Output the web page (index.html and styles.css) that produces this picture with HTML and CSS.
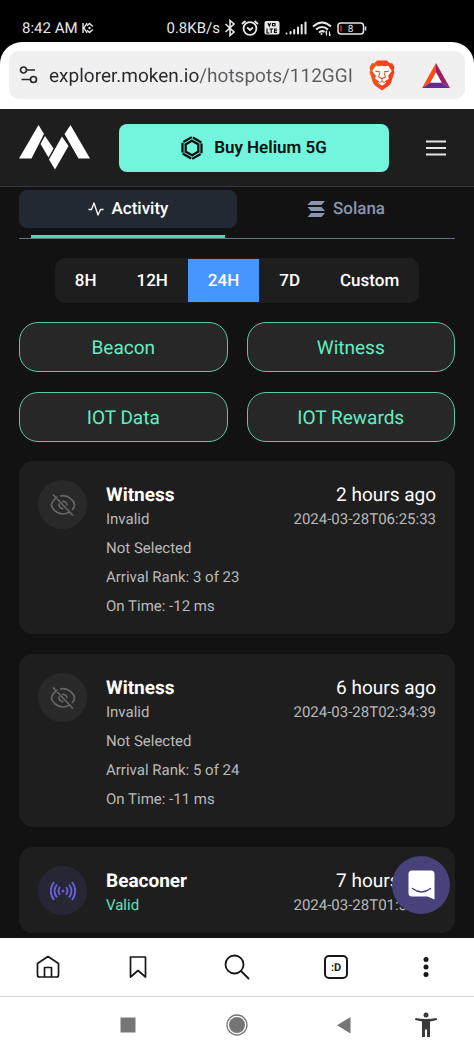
FILE: index.html
```html
<!DOCTYPE html>
<html lang="en">
<head>
<meta charset="utf-8">
<meta name="viewport" content="width=device-width, initial-scale=1">
<title>Moken Explorer</title>
<link rel="stylesheet" href="styles.css">
</head>
<body>
<div class="phone">
  <div class="status-bar">
    <span class="status-time">8:42 AM</span>
    <svg class="status-app" viewBox="0 0 12 12" width="12" height="12" fill="none" stroke="#e8e8e8" stroke-width="1.400"><path d="M1 1v10M5 1 2 6l3 5M5 3.800 7.500 1.400l3.300 3.200M5 8.200l2.500 2.400 3.300-3.200"/><path fill="#e8e8e8" stroke="none" d="M7.500 4.500 9 6 7.500 7.500 6 6z"/></svg>
    <span class="status-speed">0.8KB/s</span>
    <div class="status-icons">
      <svg viewBox="0 0 12 18" width="12" height="18" fill="none" stroke="#e8e8e8" stroke-width="1.600"><path d="M1.500 5 10 13l-4 3.500v-15L10 5l-8.500 8"/></svg>
      <svg viewBox="0 0 18 18" width="18" height="18" fill="none" stroke="#e8e8e8" stroke-width="1.800"><circle cx="9" cy="9.500" r="6.400"/><path d="M1 5l3.500-3M17 5l-3.500-3M6.200 8.500 9 11l3-2.500"/></svg>
      <svg viewBox="0 0 16 14" width="16" height="14"><rect width="15" height="13.500" x=".5" rx="2" fill="#e8e8e8"/><g fill="none" stroke="#000" stroke-width="1.100"><path d="M4 2l1.300 3L6.600 2M8.500 2.500H11v2.300H8.500zM3 7.500V12h2.300M5.500 8h3.500M7.200 8v4M13 8h-2.500v3.500H13M10.500 9.800H13"/></g></svg>
      <svg viewBox="0 0 22 14" width="22" height="14" stroke="#e8e8e8" stroke-width="2" stroke-linecap="round"><path d="M1.500 12.500v.1M5.500 11v1.500M9.200 9v3.500M13 6.500v6M16.700 4v8.500M20.500 1.500v11"/></svg>
      <svg viewBox="0 0 20 15" width="20" height="15" fill="none" stroke="#e8e8e8" stroke-width="2"><path d="M1 5.500q9-8 18 0M4 8.500q6-5 12 0M7 11.500q3-2.500 5.500-.5"/><circle cx="9.500" cy="13" r="1" fill="#e8e8e8" stroke="none"/><path stroke-width="1.200" d="M14.500 14.500v-4l-1 1.200M17.500 10.500v4l1-1.200"/></svg>
      <svg class="battery" viewBox="0 0 30 13" width="30" height="13"><rect x="1" y="1" width="25.500" height="11" rx="3" fill="none" stroke="#e8e8e8" stroke-width="1.500"/><path d="M28.500 4.500v4" stroke="#e8e8e8" stroke-width="1.500"/><path d="M4 3.500v6" stroke="#e0243a" stroke-width="1.500"/><text class="battery-text" x="13.500" y="9.800" text-anchor="middle">8</text></svg>
    </div>
  </div>

  <div class="browser-bar">
    <div class="address">
      <svg class="site-icon" viewBox="0 0 20 18" width="20" height="18" fill="none" stroke="#28292d" stroke-width="1.700"><circle cx="5.500" cy="4" r="3"/><path d="M8.500 4H17M3.500 13.500h9"/><circle cx="15.500" cy="13.500" r="3"/></svg>
      <input class="url" type="text" aria-label="Address" value="explorer.moken.io/hotspots/112GGI">
      <button class="icon-button shield" type="button" aria-label="Brave Shields">
        <svg viewBox="0 0 26 31" width="26" height="31"><defs><linearGradient id="lion"><stop stop-color="#f4561e"/><stop offset="1" stop-color="#f8361d"/></linearGradient></defs><path fill="url(#lion)" d="M8 .5h10l3 3 2-.5 2.500 4-.8 3 .8 2-3.500 11-2 2.500L13 30.500 6 25.500 4 23 .5 12l.8-2-.8-3L3 3l2 .5z"/><path fill="#fff" d="m7 5.500 2.500.8L13 5.700l3.500.6 2.500-.8 3.800 5.500-3.600 4.700.6 3-4.300 2.800 1.800 1.200L13 25.800l-4.300-3.100 1.800-1.200-4.300-2.800.6-3L3.200 11z"/><path fill="#f2441d" d="m6 10.500 5 .8-.3 1.300-4-.8zM20 10.500l-5 .8.300 1.300 4-.8zM10.500 12.500l.8.200-1 4 2.700 1.300v3.200l-.4-.1-.2-2.200L9 17.200zM15.500 12.500l-.8.200 1 4-2.700 1.300v3.200l.4-.1.2-2.200L17 17.200zM10 22.500l3-1.800 3 1.800-.6.600-2.400-1.300-2.400 1.300z"/></svg>
      </button>
      <button class="icon-button" type="button" aria-label="Brave Rewards">
        <svg viewBox="0 0 28 25" width="28" height="25"><path fill="#ff4b14" d="M14 0 0 25l8.500-5.500L14 9.500z"/><path fill="#9e1f63" d="m14 0 14 25-8.500-5.500L14 9.500z"/><path fill="#662d91" d="m0 25 8.500-5.500h11L28 25z"/><path fill="#fff" d="m14 9.500 5.500 10h-11z"/></svg>
      </button>
    </div>
  </div>

  <main class="page">
    <header class="site-header">
      <a class="logo" href="#" aria-label="Moken">
        <svg viewBox="0 0 71 45" width="71" height="45" fill="#fff"><path d="M19.500 0 25 9 12.500 33.500H0zM26 11l8.500 12.500-5 9L21.500 19zM43 11.500 49.500 21 36 44.500 30 34.500zM51.500 0 71 33.500H59.500L45.500 9z"/></svg>
      </a>
      <button class="buy" type="button">
        <svg viewBox="-11 -12 22 24" width="22" height="24" fill="none" stroke="#07110f" stroke-width="2.300"><path id="blade" d="M9.500-4.500v9.800M6.300-4.800v7.800"/><use href="#blade" transform="rotate(60)"/><use href="#blade" transform="rotate(120)"/><use href="#blade" transform="rotate(180)"/><use href="#blade" transform="rotate(240)"/><use href="#blade" transform="rotate(300)"/></svg>
        <span>Buy Helium 5G</span>
      </button>
      <button class="icon-button" type="button" aria-label="Menu">
        <svg viewBox="0 0 20 16" width="20" height="16" stroke="#e6e6e6" stroke-width="1.900"><path d="M0 1.500h20M0 8h20M0 14.500h20"/></svg>
      </button>
    </header>

    <div class="content">
      <nav class="tabs">
        <button class="tab tab-active" type="button">
          <svg viewBox="0 0 16 14" width="16" height="14" fill="none" stroke="#fff" stroke-width="1.300" stroke-linejoin="round"><path d="M.5 7.500h3L6 1l4 12 2.500-5.500h3"/></svg>
          <span>Activity</span>
        </button>
        <button class="tab" type="button">
          <svg viewBox="0 0 18 16" width="18" height="16" fill="#8795b0"><path d="M4 0h14l-3.500 4H.5zM.5 6h14L18 10H4zM4 12h14l-3.500 4H.5z"/></svg>
          <span>Solana</span>
        </button>
      </nav>

      <div class="ranges">
        <button type="button">8H</button>
        <button type="button">12H</button>
        <button class="range-active" type="button">24H</button>
        <button type="button">7D</button>
        <button type="button">Custom</button>
      </div>

      <div class="filters">
        <button type="button">Beacon</button>
        <button type="button">Witness</button>
        <button type="button">IOT Data</button>
        <button type="button">IOT Rewards</button>
      </div>

      <article class="card">
        <div class="badge"><svg viewBox="0 0 26 22" width="26" height="22" fill="none" stroke="#656565" stroke-width="1.700"><path d="M7.500 3C4 5 1.500 9 1.500 11c0 3 5 9 11.500 9 2.500 0 4.500-.8 6.500-2M10 2c9-2 14.500 6 14.500 9 0 1.500-1 3.500-2.500 5M9.500 9.500c-1.500 3 1 5.500 4 5M12 7.500c3-.5 5 1 5 4M3 .5 23 21.500"/></svg></div>
        <div class="details">
          <h2>Witness</h2>
          <p>Invalid</p>
          <p class="extra">Not Selected</p>
          <p class="extra">Arrival Rank: 3 of 23</p>
          <p class="extra">On Time: -12 ms</p>
        </div>
        <div class="when"><span class="ago">2 hours ago</span><time>2024-03-28T06:25:33</time></div>
      </article>

      <article class="card">
        <div class="badge"><svg viewBox="0 0 26 22" width="26" height="22" fill="none" stroke="#656565" stroke-width="1.700"><path d="M7.500 3C4 5 1.500 9 1.500 11c0 3 5 9 11.500 9 2.500 0 4.500-.8 6.500-2M10 2c9-2 14.500 6 14.500 9 0 1.500-1 3.500-2.500 5M9.500 9.500c-1.500 3 1 5.500 4 5M12 7.500c3-.5 5 1 5 4M3 .5 23 21.500"/></svg></div>
        <div class="details">
          <h2>Witness</h2>
          <p>Invalid</p>
          <p class="extra">Not Selected</p>
          <p class="extra">Arrival Rank: 5 of 24</p>
          <p class="extra">On Time: -11 ms</p>
        </div>
        <div class="when"><span class="ago">6 hours ago</span><time>2024-03-28T02:34:39</time></div>
      </article>

      <article class="card">
        <div class="badge badge-beacon"><svg viewBox="0 0 26 20" width="26" height="20" fill="none" stroke="#6562d8" stroke-width="1.900"><circle cx="13" cy="10" r="1.500" fill="#6562d8" stroke="none"/><path d="M10 6q-3 4 0 8M16 6q3 4 0 8M7 3.500q-5 6.500 0 13M19 3.500q5 6.500 0 13M4 1q-6.500 9 0 18M22 1q6.500 9 0 18"/></svg></div>
        <div class="details">
          <h2>Beaconer</h2>
          <p class="valid">Valid</p>
        </div>
        <div class="when"><span class="ago">7 hours ago</span><time>2024-03-28T01:35:33</time></div>
      </article>
    </div>

    <button class="chat" type="button" aria-label="Open chat">
      <svg viewBox="0 0 27 30" width="27" height="30"><path fill="#fff" d="M4 .5h19a3.500 3.500 0 0 1 3.500 3.500v25.500l-7-3H4A3.500 3.500 0 0 1 .5 23V4A3.500 3.500 0 0 1 4 .5z"/><path d="M4.500 18.500q9 7 18 0" fill="none" stroke="#47427a" stroke-width="1.500" stroke-linecap="round"/></svg>
    </button>
  </main>

  <nav class="toolbar">
    <button class="icon-button" type="button" aria-label="Home"><svg viewBox="0 0 24 24" width="24" height="24" fill="none" stroke="#16171b" stroke-width="1.700" stroke-linejoin="round"><path d="M1.500 8.500 12 1.500l10.500 7v11.500a2 2 0 0 1-2 2h-17a2 2 0 0 1-2-2zM8.500 22v-9.500h7V22"/></svg></button>
    <button class="icon-button" type="button" aria-label="Bookmarks"><svg viewBox="0 0 24 24" width="24" height="24" fill="none" stroke="#16171b" stroke-width="1.700" stroke-linejoin="round"><path d="M4.500 2h15v20L12 15.500 4.500 22z"/></svg></button>
    <button class="icon-button" type="button" aria-label="Search"><svg viewBox="0 0 26 26" width="26" height="26" fill="none" stroke="#16171b" stroke-width="1.800" stroke-linecap="round"><circle cx="10.500" cy="10.500" r="9"/><path d="m17 17 7.500 7.500"/></svg></button>
    <button class="tab-count" type="button">:D</button>
    <button class="icon-button" type="button" aria-label="More"><svg viewBox="0 0 24 22" width="24" height="22" fill="#16171b"><circle cx="12" cy="3.500" r="2.500"/><circle cx="12" cy="11" r="2.500"/><circle cx="12" cy="18.500" r="2.500"/></svg></button>
  </nav>

  <nav class="system-bar">
    <button class="icon-button recents" type="button" aria-label="Recent apps"><svg viewBox="0 0 24 24" width="24" height="24"><path fill="#757575" d="M4.500 4.500h15v15h-15z"/></svg></button>
    <button class="icon-button" type="button" aria-label="Home screen"><svg viewBox="0 0 24 24" width="24" height="24"><circle cx="12" cy="12" r="10" fill="none" stroke="#757575" stroke-width="1.300"/><circle cx="12" cy="12" r="8" fill="#757575"/></svg></button>
    <button class="icon-button" type="button" aria-label="Back"><svg viewBox="0 0 24 24" width="24" height="24"><path fill="#757575" d="M18.500 4v16.500L5 12.200z"/></svg></button>
    <button class="icon-button" type="button" aria-label="Accessibility"><svg viewBox="0 0 24 26" width="24" height="26" fill="#3a3a3a"><circle cx="12" cy="3" r="2.500"/><path d="M1.500 6q10.500 2 21 0l.5 2-7 1.500V25h-3v-7.500h-2V25H8V9.500L1 8z"/></svg></button>
  </nav>
</div>
</body>
</html>
```
FILE: styles.css
```css
* {
  box-sizing: border-box;
}

body {
  margin: 0;
  background: #000;
  font-family: Roboto, "Liberation Sans", sans-serif;
  color: #fff;
  text-rendering: geometricPrecision;
}

button,
input {
  margin: 0;
  padding: 0;
  border: 0;
  background: none;
  font: inherit;
  color: inherit;
  text-rendering: inherit;
}

h2,
p {
  margin: 0;
}

svg {
  display: block;
  flex: none;
}

.phone {
  display: flex;
  flex-direction: column;
  height: 100vh;
  overflow: hidden;
}

.icon-button {
  display: flex;
  align-items: center;
  justify-content: center;
}

.status-bar {
  display: flex;
  align-items: center;
  gap: 4px;
  padding: 18px 107px 4px 22px;
  height: 42px;
  flex: none;
  color: #e8e8e8;
  font-size: 15px;
  line-height: 20px;
}

.status-speed {
  margin-left: auto;
}

.status-icons {
  display: flex;
  align-items: center;
  gap: 5px;
}

.battery-text {
  font-size: 10px;
  fill: #e8e8e8;
}

.browser-bar {
  flex: none;
  padding: 9px 9px 10px;
  background: #fff;
  border-radius: 22px 22px 0 0;
}

.address {
  display: flex;
  align-items: center;
  height: 48px;
  padding: 0 15px 0 9px;
  border-radius: 10px;
  background: #f0f0f1;
}

.url {
  flex: 1;
  min-width: 0;
  height: 32px;
  margin-left: 11px;
  outline: 0;
  font-size: 19px;
  background: linear-gradient(90deg, #28292d 150px, #5b5c60 150px);
  -webkit-background-clip: text;
  background-clip: text;
  -webkit-text-fill-color: transparent;
}

.shield {
  margin: 0 27px 0 12px;
}

.page {
  position: relative;
  flex: 1;
  min-height: 0;
  overflow: hidden;
  background: #121212;
}

.site-header {
  display: flex;
  align-items: center;
  height: 78px;
  padding: 0 28px 0 19px;
  background: #1e1e1e;
  border-bottom: 1px solid #33363b;
}

.buy {
  display: flex;
  align-items: center;
  justify-content: center;
  gap: 11px;
  flex: 1;
  height: 48px;
  margin: 0 37px 0 29px;
  border-radius: 8px;
  background: #72f5dc;
  color: #07110f;
  font-size: 17px;
  font-weight: 600;
}

.content {
  padding: 3px 19px 0;
}

.tabs {
  display: grid;
  grid-template-columns: 1fr 1fr;
  border-bottom: 1px solid #697386;
}

.tab {
  position: relative;
  display: flex;
  align-items: center;
  justify-content: center;
  gap: 8px;
  height: 38px;
  margin-bottom: 10px;
  border-radius: 8px;
  color: #8795b0;
  font-size: 17px;
  font-weight: 500;
}

.tab-active {
  background: #232932;
  color: #fff;
}

.tab-active::after {
  content: "";
  position: absolute;
  left: 12px;
  right: 12px;
  bottom: -10px;
  height: 3px;
  background: #4fd6ae;
}

.ranges {
  display: flex;
  width: fit-content;
  margin: 19px auto;
  padding: 1px 0;
  border-radius: 10px;
  background: #1e1e1e;
}

.ranges button {
  height: 43px;
  padding: 0 20px;
  font-size: 17px;
  font-weight: 500;
}

.ranges .range-active {
  background: #4796ff;
}

.filters {
  display: grid;
  grid-template-columns: 1fr 1fr;
  gap: 20px 19px;
  margin-bottom: 19px;
}

.filters button {
  height: 50px;
  border: 1px solid #5cc9a4;
  border-radius: 19px;
  background: #272727;
  color: #64edc3;
  font-size: 19px;
}

.card {
  display: flex;
  align-items: flex-start;
  margin-bottom: 20px;
  padding: 19px 19px 18px;
  border-radius: 14px;
  background: #1e1e1e;
}

.badge {
  display: flex;
  align-items: center;
  justify-content: center;
  flex: none;
  width: 49px;
  height: 49px;
  margin-right: 19px;
  border-radius: 50%;
  background: #292929;
}

.badge-beacon {
  background: #272635;
}

.details {
  flex: 1;
  color: #b9b9b9;
  font-size: 15px;
  line-height: 19px;
}

.details h2 {
  color: #fff;
  font-size: 19px;
  line-height: 30px;
  font-weight: 700;
}

.details .extra {
  margin-top: 10px;
}

.details .valid {
  color: #5fe3bb;
}

.when {
  display: flex;
  flex-direction: column;
  text-align: right;
  color: #b9b9b9;
  font-size: 15px;
  line-height: 19px;
}

.ago {
  color: #fff;
  font-size: 19px;
  line-height: 30px;
}

.chat {
  position: absolute;
  right: 24px;
  bottom: 24px;
  display: flex;
  align-items: center;
  justify-content: center;
  width: 58px;
  height: 58px;
  border-radius: 50%;
  background: #47427a;
}

.toolbar,
.system-bar {
  display: grid;
  grid-template-columns: 96fr 84fr 114fr 84fr 96fr;
  align-items: center;
  justify-items: center;
  flex: none;
  height: 58px;
  background: #fff;
}

.tab-count {
  width: 24px;
  height: 24px;
  border: 2px solid #16171b;
  border-radius: 5px;
  color: #16171b;
  font-size: 11px;
  font-weight: 700;
}

.system-bar {
  grid-template-columns: 92fr 72fr 146fr 68fr 96fr;
  height: 57px;
  border-top: 1px solid #d5d5d5;
}

.recents {
  grid-column: 2;
}
```
